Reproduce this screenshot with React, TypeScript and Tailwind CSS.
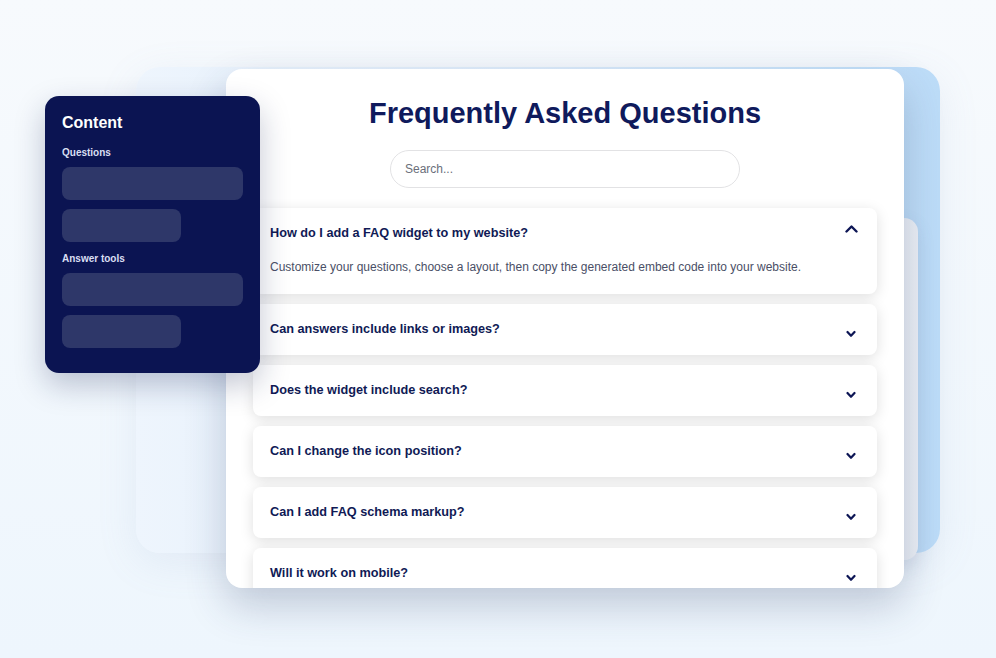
import React from "react";

const questions = [
  "Can answers include links or images?",
  "Does the widget include search?",
  "Can I change the icon position?",
  "Can I add FAQ schema markup?",
  "Will it work on mobile?",
];

function ChevronUp() {
  return (
    <svg width="13" height="9" viewBox="0 0 13 9" fill="none">
      <polyline points="1.5,7.5 6.5,2.5 11.5,7.5" stroke="#0d1655" strokeWidth="2.4" strokeLinecap="round" strokeLinejoin="round" />
    </svg>
  );
}

function ChevronDown() {
  return (
    <svg width="10" height="8" viewBox="0 0 10 8" fill="none">
      <polyline points="1.5,2 5,5.8 8.5,2" stroke="#0d1655" strokeWidth="2.2" strokeLinecap="round" strokeLinejoin="round" />
    </svg>
  );
}

function SidePanel() {
  return (
    <div className="absolute left-[45px] top-[96px] w-[215px] h-[277px] rounded-[14px] bg-[#0b1452] px-[17px] pt-[17px] shadow-[0_12px_30px_rgba(20,30,80,0.25)] z-30">
      <div className="text-[16px] leading-[20px] font-bold text-white">Content</div>
      <div className="mt-[14px] text-[10px] leading-[12px] font-bold text-[#d9dff2]">Questions</div>
      <div className="mt-[8px] flex flex-col gap-[9px]">
        <div className="h-[33px] w-full rounded-[8px] bg-[#2e3769]" />
        <div className="h-[33px] w-[119px] rounded-[8px] bg-[#2e3769]" />
      </div>
      <div className="mt-[11px] text-[10px] leading-[12px] font-bold text-[#d9dff2]">Answer tools</div>
      <div className="mt-[8px] flex flex-col gap-[9px]">
        <div className="h-[33px] w-full rounded-[8px] bg-[#2e3769]" />
        <div className="h-[33px] w-[119px] rounded-[8px] bg-[#2e3769]" />
      </div>
    </div>
  );
}

function FaqCard() {
  return (
    <div className="absolute left-[226px] top-[69px] w-[678px] h-[519px] rounded-[16px] bg-white overflow-hidden shadow-[0_18px_40px_rgba(40,60,100,0.24)] z-20">
      <h1 className="pt-[26px] text-center text-[29px] leading-[36px] font-bold text-[#0f1a5c]">
        Frequently Asked Questions
      </h1>
      <div className="mt-[19px] flex justify-center">
        <div className="w-[350px] h-[38px] rounded-full border border-[#e2e2e4] flex items-center px-[14px] text-[12px] text-[#6b6f7a]">
          Search...
        </div>
      </div>
      <div className="mt-[20px] px-[27px] flex flex-col gap-[10px]">
        <div className="rounded-[8px] bg-white shadow-[0_3px_14px_rgba(0,0,0,0.13)] px-[17px] pt-[17px] pb-[19px]">
          <div className="flex justify-between items-start h-[16px]">
            <span className="text-[12.7px] leading-[16px] font-bold text-[#101a55]">
              How do I add a FAQ widget to my website?
            </span>
            <span className="-mt-[1px] mr-[2px]">
              <ChevronUp />
            </span>
          </div>
          <p className="mt-[18px] text-[12px] leading-[16px] text-[#4a4f66]">
            Customize your questions, choose a layout, then copy the generated embed code into your website.
          </p>
        </div>
        {questions.map((q) => (
          <div
            key={q}
            className="h-[51px] shrink-0 rounded-[8px] bg-white shadow-[0_3px_14px_rgba(0,0,0,0.13)] px-[17px] pt-[17px] flex justify-between items-start"
          >
            <span className="text-[12.7px] leading-[16px] font-bold text-[#101a55]">{q}</span>
            <span className="mt-[9px] mr-[4px]">
              <ChevronDown />
            </span>
          </div>
        ))}
      </div>
    </div>
  );
}

export default function App() {
  return (
    <div
      className="relative w-[996px] h-[658px] overflow-hidden bg-gradient-to-b from-[#f7fafd] to-[#eef6fd]"
      style={{ fontFamily: '"Liberation Sans", Arial, sans-serif' }}
    >
      {/* back blue card */}
      <div className="absolute left-[136px] top-[67px] w-[804px] h-[486px] rounded-[24px] bg-gradient-to-r from-[#eef5fd] via-[#dcebfa] to-[#bcdcf8] shadow-[0_10px_40px_rgba(120,150,190,0.12)] z-0" />
      {/* grey card peeking out right */}
      <div className="absolute left-[860px] top-[218px] w-[58px] h-[342px] rounded-[14px] bg-gradient-to-r from-[#dfe5ef] to-[#edf1f7] shadow-[0_6px_18px_rgba(80,100,140,0.12)] z-10" />
      <FaqCard />
      <SidePanel />
    </div>
  );
}
